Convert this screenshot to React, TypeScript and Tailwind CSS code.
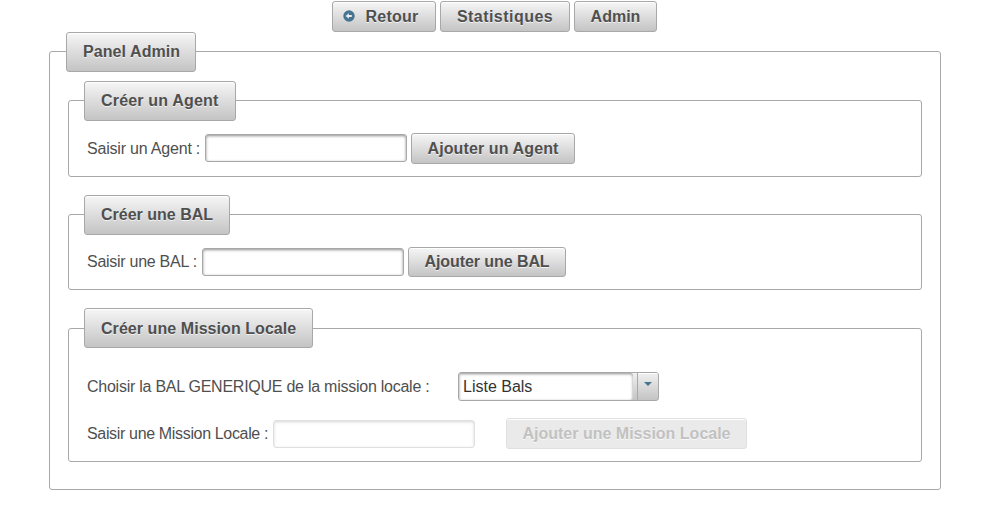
import type { ReactNode } from "react";

const surface =
  "border border-[#a8a8a8] rounded-[3px] bg-linear-to-b from-[#f6f6f6] to-[#c4c4c4] font-bold text-[#4f4f4f] whitespace-nowrap [text-shadow:0_1px_0_rgba(255,255,255,0.7)] shadow-[inset_0_1px_0_#fff]";

function Button({ className = "", children }: { className?: string; children: ReactNode }) {
  return (
    <button type="button" className={`flex shrink-0 items-center justify-center ${surface} ${className}`}>
      {children}
    </button>
  );
}

function Panel({
  title,
  className,
  legendClass,
  children,
}: {
  title: string;
  className: string;
  legendClass: string;
  children: ReactNode;
}) {
  return (
    <section className={`flex flex-col items-start rounded-[3px] border border-[#a8a8a8] ${className}`}>
      <h2 className={`flex h-10 shrink-0 items-center pl-4 ${surface} ${legendClass}`}>{title}</h2>
      {children}
    </section>
  );
}

function TextInput({ className = "", disabled = false, label }: { className?: string; disabled?: boolean; label: string }) {
  return (
    <input
      type="text"
      aria-label={label}
      disabled={disabled}
      className={`h-7 w-[202px] shrink-0 rounded-[3px] border border-[#a8a8a8] bg-white px-1 shadow-[inset_0_1px_3px_#8f8f8f] outline-none ${className}`}
    />
  );
}

export default function App() {
  return (
    <div className="h-[522px] w-[987px] overflow-hidden bg-white pt-px font-['Liberation_Sans',Arial,sans-serif] text-[16px] leading-[18px] text-[#4f4f4f]">
      <nav className="ml-[332px] flex h-[31px] gap-1">
        <Button className="w-[104px] gap-[11px] pr-[7px] tracking-[0.2px]">
          <svg width="12" height="12" viewBox="0 0 12 12" className="-mt-0.5" aria-hidden="true">
            <circle cx="6" cy="6" r="4.6" fill="none" stroke="#457490" strokeWidth="2.2" />
            <circle cx="6" cy="6" r="4" fill="#457490" />
            <path d="M2.7 6 5.8 3.2v1.9h3v1.8h-3v1.9z" fill="#ededed" />
          </svg>
          <span>Retour</span>
        </Button>
        <Button className="w-[130px] tracking-[0.46px]">Statistiques</Button>
        <Button className="w-[83px]">Admin</Button>
      </nav>

      <Panel title="Panel Admin" className="mt-[19px] ml-[49px] h-[439px] w-[892px]" legendClass="-mt-5 ml-4 w-[130px] tracking-[0.08px]">
        <Panel title="Créer un Agent" className="mt-7 ml-[18px] h-[77px] w-[854px]" legendClass="-mt-5 ml-[15px] w-[152px] tracking-[0.18px]">
          <div className="mt-3 ml-[18px] flex h-[31px] items-center">
            <label className="w-[118px] whitespace-nowrap tracking-[-0.2px]">Saisir un Agent :</label>
            <TextInput label="Agent" className="-mt-px" />
            <Button className="ml-1 h-[31px] w-[164px] tracking-[0.12px]">Ajouter un Agent</Button>
          </div>
        </Panel>

        <Panel title="Créer une BAL" className="mt-[37px] ml-[18px] h-[76px] w-[854px]" legendClass="-mt-5 ml-[15px] w-[146px]">
          <div className="mt-3 ml-[18px] flex h-[30px] items-center">
            <label className="w-[115px] whitespace-nowrap tracking-[-0.27px]">Saisir une BAL :</label>
            <TextInput label="BAL" />
            <Button className="ml-1 h-[30px] w-[158px] tracking-[-0.07px]">Ajouter une BAL</Button>
          </div>
        </Panel>

        <Panel title="Créer une Mission Locale" className="mt-[38px] ml-[18px] h-[134px] w-[854px]" legendClass="-mt-[21px] ml-[15px] w-[229px] pt-px tracking-[0.06px]">
          <div className="mt-6 ml-[18px] flex h-[29px] items-center">
            <label className="w-[371px] whitespace-nowrap tracking-[-0.25px]">Choisir la BAL GENERIQUE de la mission locale :</label>
            <div className="flex h-[29px] w-[201px] overflow-hidden rounded-[3px] border border-[#a8a8a8] bg-linear-to-b from-[#f0f0f0] to-[#c4c4c4]">
              <div className="flex w-[174px] items-center rounded-r-[3px] bg-white pl-1 text-[#333333] shadow-[inset_0_1px_3px_#8f8f8f]">
                Liste Bals
              </div>
              <div className="ml-1 flex flex-1 justify-center border-l border-[#a8a8a8] pt-[9px] shadow-[inset_0_1px_0_#fff]">
                <svg width="8" height="5" viewBox="0 0 8 5" aria-hidden="true">
                  <path d="M0 0h8L4 4z" fill="#457490" />
                </svg>
              </div>
            </div>
          </div>
          <div className="mt-[17px] ml-[18px] flex h-[31px] items-center">
            <label className="w-[186px] whitespace-nowrap tracking-[-0.34px]">Saisir une Mission Locale :</label>
            <TextInput label="Mission Locale" disabled className="opacity-35" />
            <Button className="ml-[31px] h-[31px] w-[241px] bg-[#c4c4c4] bg-none opacity-35">Ajouter une Mission Locale</Button>
          </div>
        </Panel>
      </Panel>
    </div>
  );
}
